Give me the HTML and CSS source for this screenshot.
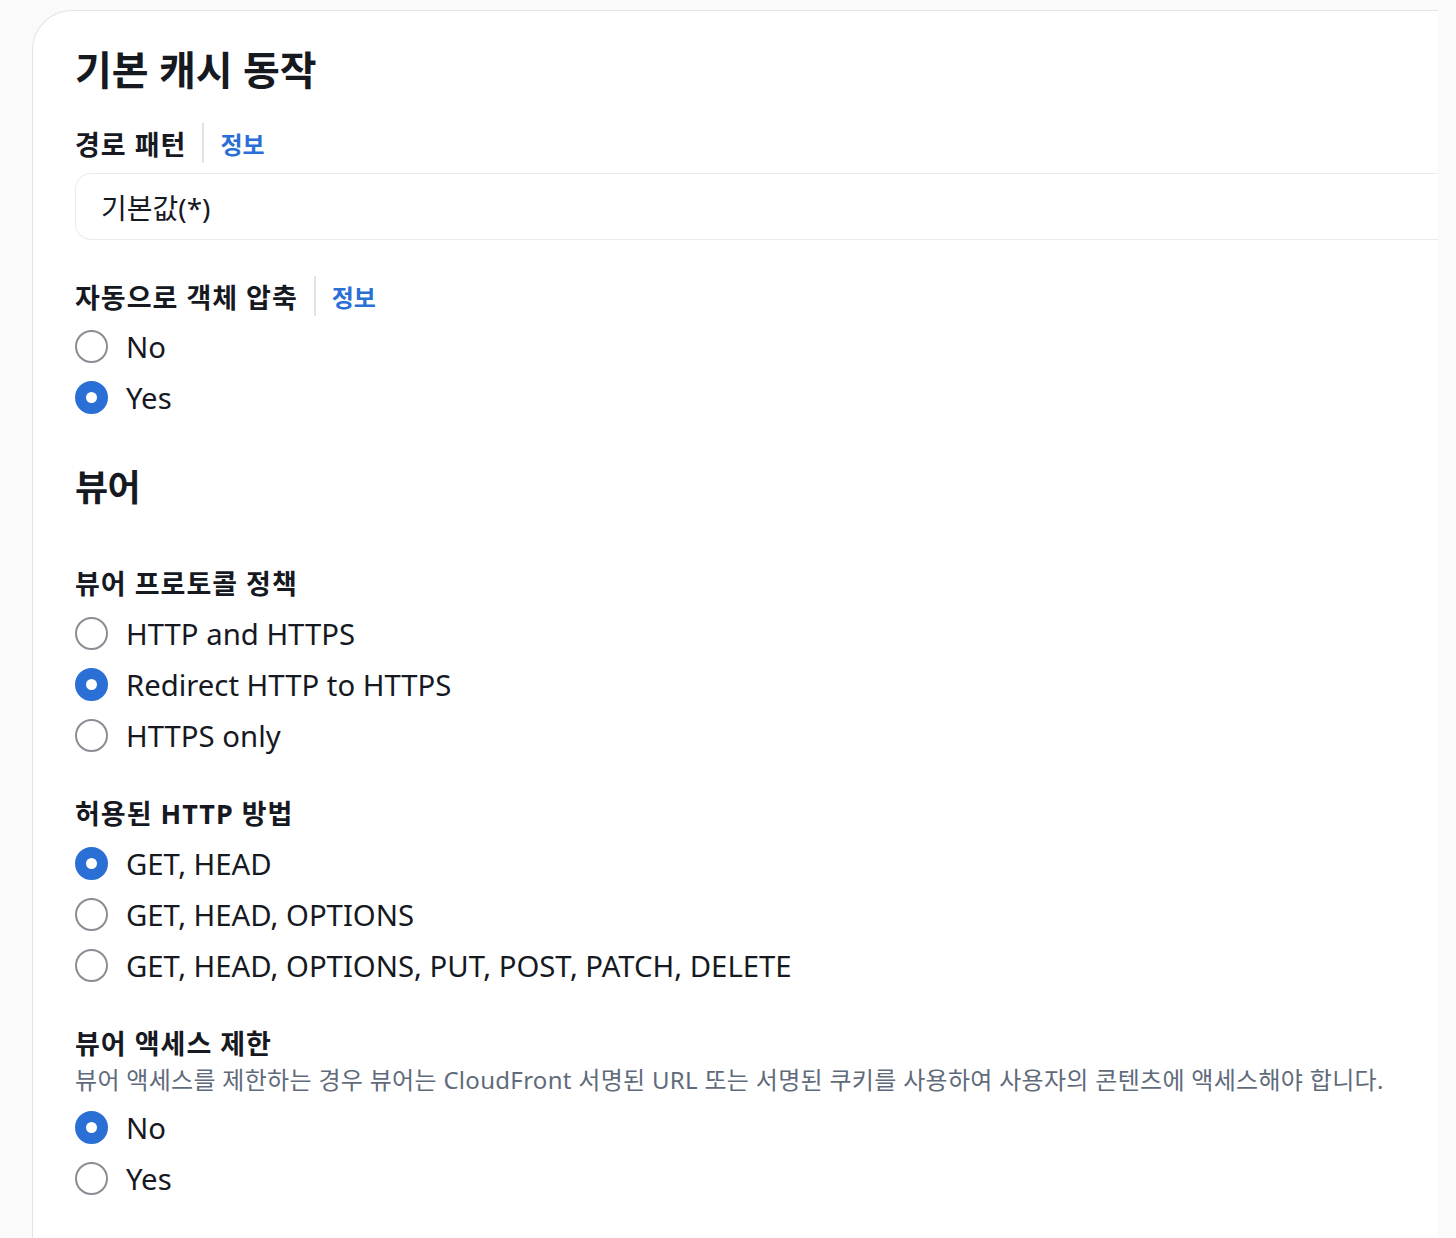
FILE: index.html
```html
<!DOCTYPE html>
<html lang="ko">
<head>
<meta charset="utf-8">
<link rel="stylesheet" href="styles.css">
</head>
<body>
<div class="card">
  <h2 class="title">기본 캐시 동작</h2>

  <div class="label-row">
    <span class="label">경로 패턴</span><span class="sep"></span><a class="info">정보</a>
  </div>
  <div class="input">기본값(*)</div>

  <div class="label-row gap-compress">
    <span class="label">자동으로 객체 압축</span><span class="sep"></span><a class="info">정보</a>
  </div>
  <div class="radios">
    <div class="radio"><span class="dot"></span><span class="rtext">No</span></div>
    <div class="radio"><span class="dot on"></span><span class="rtext">Yes</span></div>
  </div>

  <h2 class="title sub">뷰어</h2>

  <div class="label-row gap-proto">
    <span class="label">뷰어 프로토콜 정책</span>
  </div>
  <div class="radios r6">
    <div class="radio"><span class="dot"></span><span class="rtext">HTTP and HTTPS</span></div>
    <div class="radio"><span class="dot on"></span><span class="rtext">Redirect HTTP to HTTPS</span></div>
    <div class="radio"><span class="dot"></span><span class="rtext">HTTPS only</span></div>
  </div>

  <div class="label-row gap-methods">
    <span class="label">허용된 HTTP 방법</span>
  </div>
  <div class="radios r6">
    <div class="radio"><span class="dot on"></span><span class="rtext">GET, HEAD</span></div>
    <div class="radio"><span class="dot"></span><span class="rtext">GET, HEAD, OPTIONS</span></div>
    <div class="radio"><span class="dot"></span><span class="rtext">GET, HEAD, OPTIONS, PUT, POST, PATCH, DELETE</span></div>
  </div>

  <div class="label-row gap-methods">
    <span class="label">뷰어 액세스 제한</span>
  </div>
  <div class="desc">뷰어 액세스를 제한하는 경우 뷰어는 CloudFront 서명된 URL 또는 서명된 쿠키를 사용하여 사용자의 콘텐츠에 액세스해야 합니다.</div>
  <div class="radios r4">
    <div class="radio"><span class="dot on"></span><span class="rtext">No</span></div>
    <div class="radio"><span class="dot"></span><span class="rtext">Yes</span></div>
  </div>
</div>
</body>
</html>
```

FILE: styles.css
```css
html, body {
  margin: 0;
  padding: 0;
}
body {
  background: #fafafa;
  font-family: "Noto Sans", "Noto Sans CJK KR", sans-serif;
  color: #16191f;
  height: 1238px;
  overflow: hidden;
}
.card {
  margin: 10px 0 0 32px;
  width: 1406px;
  height: 1228px;
  background: #fff;
  border: 1px solid #e3e3e3;
  border-right: none;
  border-bottom: none;
  border-top-left-radius: 40px;
  padding: 34px 0 0 42px;
  box-sizing: border-box;
}
.title {
  margin: 0;
  font-size: 40px;
  line-height: 50px;
  font-weight: 700;
}
.title.sub {
  margin-top: 40px;
  font-size: 36px;
  letter-spacing: -0.5px;
}
.label-row {
  display: flex;
  align-items: center;
  height: 40px;
  margin-top: 28px;
}
.label {
  font-size: 27px;
  font-weight: 700;
  letter-spacing: 1px;
}
.sep {
  width: 2px;
  align-self: stretch;
  background: #e2e2e2;
  margin: 0 16px 0 16px;
}
.info {
  font-size: 24px;
  font-weight: 700;
  color: #2a6fd6;
}
.input {
  margin-top: 10px;
  height: 67px;
  box-sizing: border-box;
  border: 1px solid #e9ebed;
  border-right: none;
  border-radius: 16px 0 0 16px;
  display: flex;
  align-items: center;
  padding-left: 25px;
  font-size: 28px;
}
.gap-compress { margin-top: 36px; }
.gap-proto { margin-top: 49px; }
.gap-methods { margin-top: 31px; }
.radios {
  margin-top: 5px;
  display: flex;
  flex-direction: column;
}
.radios.r6 { margin-top: 6px; }
.radios.r4 { margin-top: 4px; }
.radio {
  height: 51px;
  display: flex;
  align-items: center;
}
.dot {
  width: 33px;
  height: 33px;
  box-sizing: border-box;
  border-radius: 50%;
  border: 2px solid #8c8c94;
  background: #fff;
  flex: none;
}
.dot.on {
  border: 11px solid #2a6fd6;
}
.rtext {
  margin-left: 18px;
  font-size: 29.3px;
}
.desc {
  height: 36px;
  line-height: 36px;
  font-size: 24px;
  letter-spacing: 0.3px;
  color: #5f6b7a;
}
```
